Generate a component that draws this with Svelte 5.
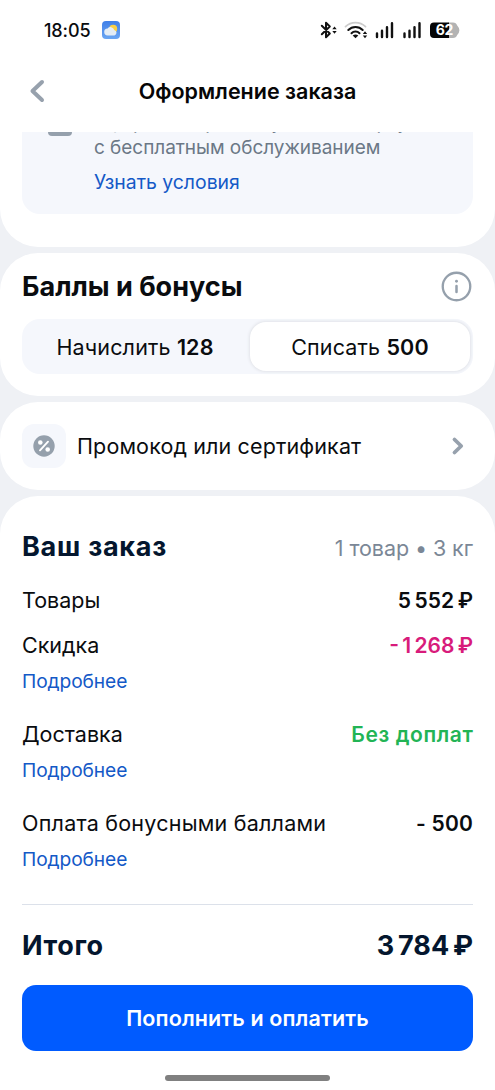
<script>
  // Which of the two bonus options is selected.
  let mode = $state('spend');

  const options = [
    {id: 'earn', label: 'Начислить', points: 128},
    {id: 'spend', label: 'Списать', points: 500}
  ];

  const rows = [
    {id: 'goods', label: 'Товары', value: '5 552 ₽'},
    {id: 'discount', label: 'Скидка', value: '- 1 268 ₽', details: true},
    {id: 'delivery', label: 'Доставка', value: 'Без доплат', details: true},
    {id: 'bonus', label: 'Оплата бонусными баллами', value: '- 500', details: true}
  ];
</script>

<div class="screen">
  <div class="status-bar">
    <span class="time">18:05</span>
    <svg class="weather" width="18" height="18" viewBox="0 0 18 18">
      <defs>
        <linearGradient id="sky" x1="0" y1="0" x2="0" y2="1">
          <stop offset="0" stop-color="#3f7fe8" />
          <stop offset="1" stop-color="#6ba6f2" />
        </linearGradient>
      </defs>
      <rect width="18" height="18" rx="4" fill="url(#sky)" />
      <circle cx="11.2" cy="7.8" r="4" fill="#f9cf45" />
      <path d="M5.8 14.5a3.5 3.5 0 0 1-.2-7 3.8 3.8 0 0 1 6.6 1.4 2.9 2.9 0 0 1 .3 5.6z" fill="#e4edf5" />
    </svg>
    <svg class="signals" width="142" height="20" viewBox="0 0 142 20">
      <!-- bluetooth -->
      <path d="M2.8 5.8l8 7.7L7 17.3V2.7l3.8 3.8-8 7.7" fill="none" stroke="#111" stroke-width="2" stroke-linejoin="round" stroke-linecap="round" />
      <path d="M13.3 9.2l2.2-2.7 2.2 2.7zM13.3 11l2.2 2.7 2.2-2.7z" fill="#111" />
      <!-- wifi -->
      <g fill="none" stroke-linecap="round">
        <path d="M26.5 6.6a14.5 14.5 0 0 1 20 0" stroke="#ccc" stroke-width="1.8" />
        <path d="M29.3 10a10 10 0 0 1 14.4 0" stroke="#111" stroke-width="2" />
        <path d="M32.5 13.2a5.6 5.6 0 0 1 8 0" stroke="#111" stroke-width="2" />
      </g>
      <path d="M33.7 15.4q2.8-2 5.6 0l-2.8 2.8z" fill="#111" />
      <path d="M43.8 14l2.2-2.7 2.2 2.7zM43.8 15.6l2.2 2.7 2.2-2.7z" fill="#111" />
      <!-- cell signal, two cards -->
      <g stroke="#111" stroke-width="2.4" stroke-linecap="round">
        <path d="M58 13.5V17M63 10.8V17M68 7.3V17M73 3.3V17" />
        <path d="M85.5 13.5V17M90.5 10.8V17M95.5 7.3V17M100.5 3.3V17" />
      </g>
      <!-- battery -->
      <path d="M129 2.5h5q3.2 0 4.2 3 2.2 2.4 2.2 4.8t-2.2 4.7q-1 3-4.2 3h-5z" fill="#b3b3b3" />
      <path d="M130 2.5h-15a4 4 0 0 0-4 4V14a4 4 0 0 0 4 4h15z" fill="#050505" />
      <text x="125.3" y="15.4" text-anchor="middle" font-size="14" font-weight="700" letter-spacing="-0.5" fill="#fff">62</text>
    </svg>
  </div>

  <header>
    <svg class="back" width="18" height="24" viewBox="0 0 18 24">
      <path d="M14 3L4.5 12l9.5 9" fill="none" stroke="#97a1ad" stroke-width="4" stroke-linecap="round" stroke-linejoin="round" />
    </svg>
    <h1>Оформление заказа</h1>
  </header>

  <main>
    <section class="card offer-card">
      <div class="offer">
        <div class="offer-mark"></div>
        <div class="offer-body">
          <p>Оформите кредитную Ozon карту<br />с бесплатным обслуживанием</p>
          <span class="link">Узнать условия</span>
        </div>
      </div>
    </section>

    <section class="card bonus-card">
      <div class="bonus-head">
        <h2>Баллы и бонусы</h2>
        <svg width="31" height="31" viewBox="0 0 32 32">
          <circle cx="16" cy="16" r="14.2" fill="none" stroke="#95a0ac" stroke-width="2.4" />
          <circle cx="16" cy="10.5" r="1.5" fill="#95a0ac" />
          <path d="M16 15.5v6.2" stroke="#95a0ac" stroke-width="2.6" stroke-linecap="round" />
        </svg>
      </div>
      <div class="segmented">
        {#each options as option (option.id)}
          <button class="segment" class:active={mode === option.id} onclick={() => (mode = option.id)}>
            {option.label} <b>{option.points}</b>
          </button>
        {/each}
      </div>
    </section>

    <section class="card promo">
      <div class="promo-icon">
        <svg width="22" height="22" viewBox="0 0 22 22">
          <circle cx="11" cy="11" r="10.7" fill="#95a0ac" />
          <path d="M7 15.3L15 6.7" stroke="#fff" stroke-width="1.9" stroke-linecap="round" />
          <circle cx="7.3" cy="7.5" r="2.3" fill="#fff" />
          <circle cx="14.7" cy="14.5" r="2.3" fill="#fff" />
        </svg>
      </div>
      <span class="promo-label">Промокод или сертификат</span>
      <svg width="14" height="20" viewBox="0 0 14 20">
        <path d="M3.5 3.5L10.2 10l-6.7 6.5" fill="none" stroke="#97a1ad" stroke-width="3.8" stroke-linecap="round" stroke-linejoin="round" />
      </svg>
    </section>

    <section class="card order">
      <div class="order-head">
        <h2>Ваш заказ</h2>
        <span class="count">1 товар • 3 кг</span>
      </div>
      {#each rows as row (row.id)}
        <div class="row {row.id}">
          <div class="line">
            <span class="label">{row.label}</span>
            <span class="value">{row.value}</span>
          </div>
          {#if row.details}
            <span class="link">Подробнее</span>
          {/if}
        </div>
      {/each}
      <div class="total">
        <span class="total-label">Итого</span>
        <span class="total-value">3 784 ₽</span>
      </div>
      <button class="pay">Пополнить и оплатить</button>
      <div class="home-bar"></div>
    </section>
  </main>
</div>

<style>
  :global(body) {
    background: #fff;
  }

  .screen {
    display: flex;
    flex-direction: column;
    width: 495px;
    height: 1090px;
    overflow: hidden;
    background: #fff;
    color: #0a0c0f;
    font-family: Inter, 'Liberation Sans', sans-serif;
    font-size: 21.5px;
  }

  h1,
  h2,
  p {
    margin: 0;
  }

  button {
    border: none;
    padding: 0;
    font: inherit;
    color: inherit;
  }

  .link {
    color: #1459c7;
  }

  .status-bar {
    display: flex;
    align-items: center;
    height: 60px;
    box-sizing: border-box;
    padding: 0 34px 0 44px;
  }

  .time {
    width: 58px;
    font-size: 18px;
    font-weight: 500;
    letter-spacing: -0.1px;
  }

  .signals {
    margin-left: auto;
  }

  header {
    display: grid;
    grid-template-columns: 18px 1fr 18px;
    align-items: center;
    flex: none;
    height: 72px;
    box-sizing: border-box;
    padding: 0 28px 10px;
  }

  h1 {
    color: #060606;
    font-size: 21.5px;
    font-weight: 600;
    text-align: center;
  }

  main {
    display: flex;
    flex-direction: column;
    gap: 6px;
    flex: 1;
    overflow: hidden;
    background: #eff1f5;
  }

  .card {
    flex: none;
    box-sizing: border-box;
    padding: 0 22px;
    border-radius: 38px;
    background: #fff;
  }

  .offer-card {
    height: 115px;
    border-radius: 0 0 38px 38px;
  }

  .offer {
    display: flex;
    height: 82px;
    overflow: hidden;
    border-radius: 0 0 18px 18px;
    background: #f5f7fc;
  }

  .offer-mark {
    width: 24px;
    height: 24px;
    margin: -20px 22px 0 26px;
    border-radius: 4px;
    background: #95a0ac;
  }

  .offer-body {
    margin-top: -22px;
    font-size: 19.4px;
    line-height: 25px;
    white-space: nowrap;
  }

  .offer-body p {
    margin-bottom: 10px;
    color: #6b7886;
    font-size: 19px;
    letter-spacing: -0.05px;
  }

  .bonus-card {
    height: 143px;
  }

  .bonus-head {
    display: flex;
    align-items: center;
    justify-content: space-between;
    height: 66px;
    padding-right: 1px;
  }

  h2 {
    font-size: 27px;
    font-weight: 700;
  }

  .segmented {
    display: grid;
    grid-template-columns: 225px 1fr;
    height: 55px;
    box-sizing: border-box;
    padding: 3px;
    border-radius: 18px;
    background: #f5f7fc;
  }

  .segment {
    border-radius: 16px;
    background: none;
    letter-spacing: 0.15px;
  }

  .segment:first-child {
    padding-right: 5px;
  }

  .segment.active {
    background: #fff;
    box-shadow: 0 0 3px 1px #e2e4e9;
  }

  .segment b {
    font-weight: 600;
  }

  .promo {
    display: flex;
    align-items: center;
    height: 88px;
  }

  .promo-icon {
    display: flex;
    align-items: center;
    justify-content: center;
    width: 44px;
    height: 44px;
    margin-right: 11px;
    border-radius: 12px;
    background: #f5f7fc;
  }

  .promo-label {
    flex: 1;
    letter-spacing: 0.13px;
  }

  .promo > svg {
    margin-right: 8px;
  }

  .order {
    display: flex;
    flex-direction: column;
    height: 594px;
    border-radius: 38px 38px 0 0;
  }

  .order-head {
    display: flex;
    align-items: baseline;
    justify-content: space-between;
    margin-top: 34px;
    height: 43px;
    color: #04162e;
  }

  .order-head h2 {
    letter-spacing: 0.75px;
  }

  .count {
    color: #7b8796;
    letter-spacing: -0.08px;
  }

  .row {
    height: 89px;
  }

  .row.goods {
    height: 45px;
  }

  .line {
    display: flex;
    align-items: baseline;
    justify-content: space-between;
    height: 53px;
    line-height: 55px;
  }

  .row .link {
    display: block;
    font-size: 19.2px;
    line-height: 20px;
    letter-spacing: -0.1px;
  }

  .value {
    font-size: 21px;
    font-weight: 600;
    word-spacing: -1.7px;
  }

  .bonus .label {
    letter-spacing: 0.23px;
  }

  .bonus .value {
    word-spacing: 0;
    letter-spacing: 0.2px;
  }

  .discount .value {
    color: #d81b7b;
    word-spacing: -2px;
  }

  .delivery .value {
    color: #22b455;
    letter-spacing: 0.6px;
    margin-right: -0.5px;
    word-spacing: 0;
  }

  .total {
    display: flex;
    align-items: center;
    justify-content: space-between;
    height: 80px;
    margin-top: 19px;
    border-top: 1px solid #dce1ea;
    color: #04162e;
    font-size: 27px;
    font-weight: 700;
  }

  .total-label {
    letter-spacing: 0.6px;
  }

  .total-value {
    word-spacing: -2.6px;
  }

  .pay {
    flex: none;
    height: 66px;
    border-radius: 14px;
    background: #005bff;
    color: #fff;
    font-weight: 600;
    letter-spacing: 0.12px;
  }

  .home-bar {
    align-self: center;
    flex: none;
    width: 165px;
    height: 6px;
    margin-top: 24px;
    border-radius: 3px;
    background: #808080;
  }
</style>
